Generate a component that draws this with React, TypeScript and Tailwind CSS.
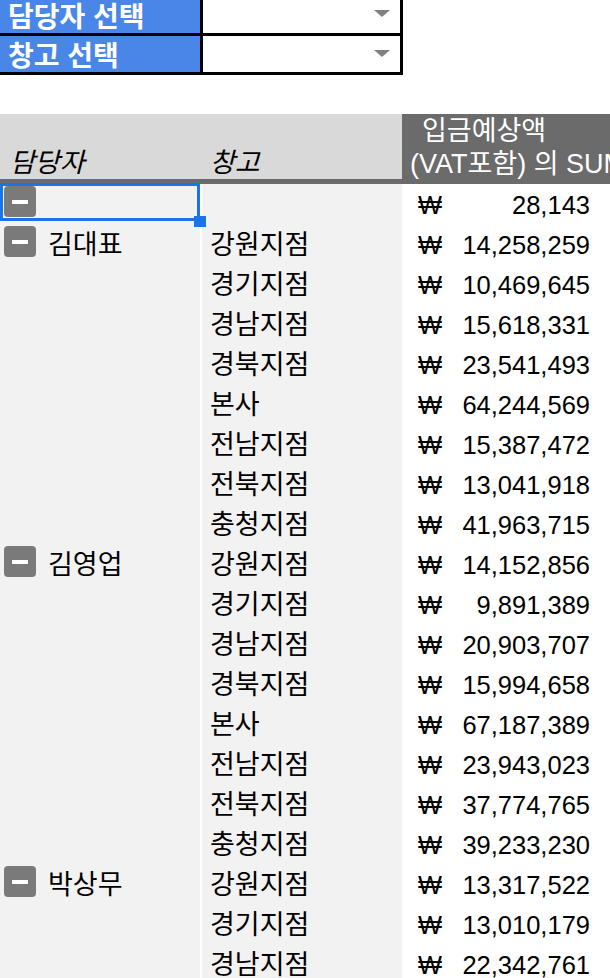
import React from 'react';

interface PivotRow {
    owner: string;
    branch: string;
    amount: string;
}

const FONT = { fontFamily: '"Liberation Sans", "Noto Sans CJK KR", sans-serif' };

const rows: PivotRow[] = [
    { owner: '', branch: '', amount: '28,143' },
    { owner: '김대표', branch: '강원지점', amount: '14,258,259' },
    { owner: '', branch: '경기지점', amount: '10,469,645' },
    { owner: '', branch: '경남지점', amount: '15,618,331' },
    { owner: '', branch: '경북지점', amount: '23,541,493' },
    { owner: '', branch: '본사', amount: '64,244,569' },
    { owner: '', branch: '전남지점', amount: '15,387,472' },
    { owner: '', branch: '전북지점', amount: '13,041,918' },
    { owner: '', branch: '충청지점', amount: '41,963,715' },
    { owner: '김영업', branch: '강원지점', amount: '14,152,856' },
    { owner: '', branch: '경기지점', amount: '9,891,389' },
    { owner: '', branch: '경남지점', amount: '20,903,707' },
    { owner: '', branch: '경북지점', amount: '15,994,658' },
    { owner: '', branch: '본사', amount: '67,187,389' },
    { owner: '', branch: '전남지점', amount: '23,943,023' },
    { owner: '', branch: '전북지점', amount: '37,774,765' },
    { owner: '', branch: '충청지점', amount: '39,233,230' },
    { owner: '박상무', branch: '강원지점', amount: '13,317,522' },
    { owner: '', branch: '경기지점', amount: '13,010,179' },
    { owner: '', branch: '경남지점', amount: '22,342,761' },
];

function FilterRow({ label, first }: { label: string; first?: boolean }) {
    return (
        <div className={`flex ${first ? 'h-[33px]' : 'h-[39px] border-t-[3px] border-black'}`}>
            <div className={`w-[200px] bg-[#4a86e8] pl-[8px] text-[28px] font-bold leading-[33px] text-white ${first ? 'pt-[1px]' : 'pt-[4px]'}`}>
                {label}
            </div>
            <div className={`flex w-[200px] justify-end border-l-[3px] border-black pr-[10px] ${first ? 'pt-[10px]' : 'pt-[14px]'}`}>
                <div className="h-0 w-0 border-l-[8px] border-r-[8px] border-t-[7px] border-l-transparent border-r-transparent border-t-[#808080]" />
            </div>
        </div>
    );
}

function MinusButton() {
    return (
        <div className="ml-[4px] mt-[2px] flex h-[31px] w-[32px] shrink-0 items-center justify-center rounded-[4px] bg-[#7a7a7a]">
            <div className="h-[4px] w-[16px] bg-white" />
        </div>
    );
}

export default function App() {
    return (
        <div className="h-[978px] w-[610px] overflow-hidden bg-white text-black" style={FONT}>

            {/* 1. FILTER CELLS */}
            <div className="w-[403px] border-b-[3px] border-r-[3px] border-black">
                <FilterRow label="담당자 선택" first />
                <FilterRow label="창고 선택" />
            </div>

            {/* 2. PIVOT HEADER */}
            <div className="mt-[39px] flex h-[70px] w-[660px] border-b-[5px] border-[#6b6b6b]">
                <div className="flex w-[200px] items-end bg-[#d9d9d9] pb-[1px] pl-[10px] text-[27px] italic leading-[30px]">
                    담당자
                </div>
                <div className="flex w-[202px] items-end bg-[#d9d9d9] pb-[1px] pl-[10px] text-[27px] italic leading-[30px]">
                    창고
                </div>
                <div className="w-[258px] whitespace-nowrap bg-[#6b6b6b] pl-[8px] pt-[1px] text-[27px] leading-[33px] text-white">
                    <div className="pl-[12px]">입금예상액</div>
                    <div>(VAT포함) 의 SUM</div>
                </div>
            </div>

            {/* 3. PIVOT BODY */}
            <div className="w-[632px]">
                {rows.map((row, i) => (
                    <div key={i} className="flex h-[40px] text-[27px] leading-[42px]">
                        <div className="relative flex w-[200px] bg-[#f2f2f2]">
                            {(i === 0 || row.owner) && <MinusButton />}
                            {row.owner && <span className="ml-[12px]">{row.owner}</span>}
                            {i === 0 && (
                                <>
                                    <div className="absolute left-0 top-[-1px] h-[38px] w-[200px] border-[3px] border-[#1a73e8]" />
                                    <div className="absolute left-[194px] top-[32px] z-10 h-[11px] w-[12px] bg-[#1a73e8]" />
                                </>
                            )}
                        </div>
                        <div className="ml-[2px] w-[200px] bg-[#f2f2f2] pl-[8px]">{row.branch}</div>
                        <div className="flex w-[230px] pl-[16px] pr-[42px] text-[25.5px]">
                            <span>₩</span>
                            <span className="flex-1 text-right">{row.amount}</span>
                        </div>
                    </div>
                ))}
            </div>

        </div>
    );
}
